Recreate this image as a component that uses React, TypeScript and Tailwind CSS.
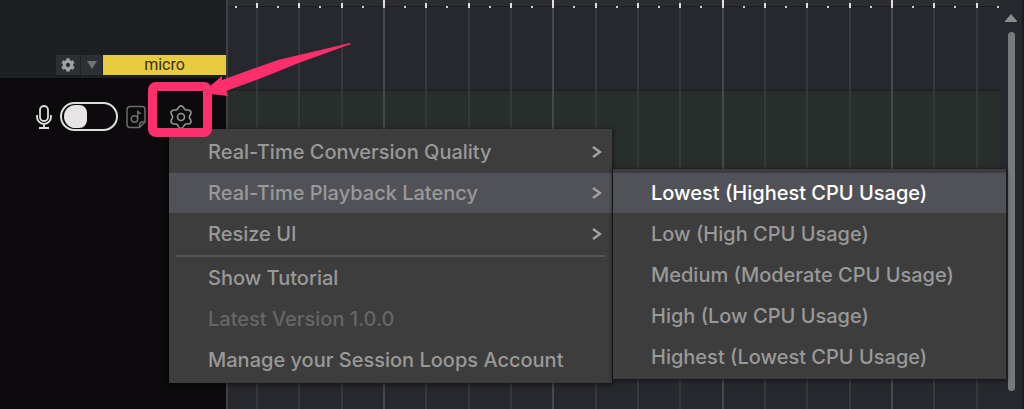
import { FaCog } from 'react-icons/fa'

interface MenuItem {
    label: string
    active?: boolean
    disabled?: boolean
    options?: string[]
    expandable?: boolean
}

const settings: MenuItem[] = [
    { label: 'Real-Time Conversion Quality', expandable: true },
    {
        label: 'Real-Time Playback Latency',
        expandable: true,
        active: true,
        options: [
            'Lowest (Highest CPU Usage)',
            'Low (High CPU Usage)',
            'Medium (Moderate CPU Usage)',
            'High (Low CPU Usage)',
            'Highest (Lowest CPU Usage)',
        ],
    },
    { label: 'Resize UI', expandable: true },
]

const actions: MenuItem[] = [
    { label: 'Show Tutorial' },
    { label: 'Latest Version 1.0.0', disabled: true },
    { label: 'Manage your Session Loops Account' },
]

const beats = Array.from({ length: 18 }, (_, i) => i)

// six soft lobes around a circle
const gearPoints = Array.from({ length: 72 }, (_, i) => {
    const angle = (i * Math.PI) / 36
    const radius = 9.8 + 1.4 * Math.cos(6 * angle)
    const x = 12 + radius * Math.sin(angle)
    const y = 12 - radius * Math.cos(angle)
    return `${x.toFixed(2)},${y.toFixed(2)}`
}).join(' ')

function GearIcon() {
    return (
        <svg className="h-6 w-6" viewBox="0 0 24 24" fill="none" stroke="currentColor" strokeWidth="1.6">
            <polygon points={gearPoints} strokeLinejoin="round" />
            <circle cx="12" cy="12" r="3.5" />
        </svg>
    )
}

function MicIcon() {
    return (
        <svg className="h-6 w-4" viewBox="0 0 16 24" fill="none" stroke="currentColor" strokeWidth="1.8">
            <rect x="4" y="1" width="8" height="15" rx="4" />
            <path d="M1 10v2a7 7 0 0 0 14 0v-2M8 19v4M3 23h10" />
        </svg>
    )
}

function NoteFileIcon() {
    return (
        <svg className="h-6 w-5" viewBox="0 0 20 24" fill="none" stroke="currentColor" strokeWidth="1.5">
            <path d="M4 1.500h12a3 3 0 0 1 3 3V17l-5.500 5.500H4a3 3 0 0 1-3-3v-15a3 3 0 0 1 3-3z" />
            <path d="M13.500 22.500V20a3 3 0 0 1 3-3H19" />
            <circle cx="8.500" cy="14" r="3.200" />
            <path d="M11.700 14V5.500c.3 1.800 1.300 2.700 3.300 3" />
        </svg>
    )
}

function Chevron() {
    return (
        <svg className="h-3 w-2.5" viewBox="0 0 10 12" fill="none" stroke="#a3a3a3" strokeWidth="2.4">
            <path d="M1 1l7 5-7 5" />
        </svg>
    )
}

function MenuRow({ label, active, disabled, options, expandable }: MenuItem) {
    return (
        <li className="relative">
            <button
                type="button"
                disabled={disabled}
                className={`flex h-10 w-full items-center justify-between pr-2.5 pl-[39px] text-left ${
                    active ? 'bg-[#515257]' : ''
                } ${disabled ? 'text-[#666666]' : 'text-[#999999]'}`}
            >
                {label}
                {expandable && <Chevron />}
            </button>
            {options && (
                <ul className="absolute -top-1 left-full ml-px flex w-[393px] flex-col gap-px bg-[#3d3d3d] pt-1 pb-0.5 shadow-[0_1px_4px_1px_rgba(0,0,0,0.5)]">
                    {options.map((option, i) => (
                        <li key={option}>
                            <button
                                type="button"
                                className={`flex h-10 w-full items-center pl-[38px] text-left ${
                                    i === 0 ? 'bg-[#515257] text-white' : 'text-[#999999]'
                                }`}
                            >
                                {option}
                            </button>
                        </li>
                    ))}
                </ul>
            )}
        </li>
    )
}

function SettingsMenu() {
    return (
        <ul className="absolute top-6 left-0 z-10 flex w-[443px] flex-col gap-px bg-[#3d3d3d] py-[3px] font-['Inter',sans-serif] text-[20px] font-medium whitespace-nowrap shadow-[0_1px_4px_1px_rgba(0,0,0,0.5)]">
            {settings.map((item) => (
                <MenuRow key={item.label} {...item} />
            ))}
            <li role="separator" className="mx-[7px] h-0.5 bg-[#545454]" />
            {actions.map((item) => (
                <MenuRow key={item.label} {...item} />
            ))}
        </ul>
    )
}

function TrackPanel() {
    return (
        <aside className="flex w-[226px] shrink-0 flex-col bg-[#0c0a0c]">
            <div className="flex h-[78px] items-end gap-px bg-[#1c2023] pb-[3px] pl-14">
                <button type="button" aria-label="Track settings" className="flex h-5 w-6 items-center justify-center bg-[#2c2f33] text-[#a0a2a3]">
                    <FaCog size={14} />
                </button>
                <button type="button" aria-label="Track menu" className="flex h-5 w-[21px] items-center justify-center bg-[#2c2f33] text-[#707375]">
                    <svg className="h-2 w-2.5" viewBox="0 0 10 8" fill="currentColor">
                        <path d="M0 0h10L5 8z" />
                    </svg>
                </button>
                <div className="flex h-5 grow items-center justify-center bg-[#e9cb40] font-['Roboto',sans-serif] text-base text-[#37321c]">
                    micro
                </div>
            </div>
            <div className="flex items-center pt-6 pl-9 text-[#6c6c6c]">
                <span className="text-[#dedede]">
                    <MicIcon />
                </span>
                <input
                    type="checkbox"
                    role="switch"
                    aria-label="Microphone"
                    className="ml-2 flex h-[29px] w-[58px] appearance-none items-center rounded-full border-2 border-[#dedede] pl-0.5 before:h-[23px] before:w-[23px] before:rounded-l-[12px] before:rounded-r-[8px] before:bg-[#e6e4e4]"
                />
                <span className="ml-2">
                    <NoteFileIcon />
                </span>
                <div className="relative ml-[23px]">
                    <button type="button" aria-label="Settings" className="flex w-6 justify-center text-[#969696]">
                        <GearIcon />
                    </button>
                    <SettingsMenu />
                </div>
            </div>
        </aside>
    )
}

function Timeline() {
    return (
        <main className="relative flex grow flex-col border-l-2 border-[#3d4145] bg-[#27282d]">
            <div className="h-1.5 bg-[#2c2d2f]" />
            <div className="h-px bg-[#1e1f20]" />
            <div className="mr-6 mt-[82px] h-[81px] border-t-2 border-[#202422] bg-[#282e2c]" />
            <div className="absolute inset-0 mr-1.5 ml-7 grid grid-cols-[repeat(18,minmax(0,1fr))]">
                {beats.map((beat) => (
                    <div
                        key={beat}
                        className={`flex flex-col items-center border-l-2 ${
                            beat % 4 === 3 ? 'border-[#46494c]' : 'border-[#36393c]'
                        }`}
                    >
                        <div
                            className={`-ml-0.5 w-0.5 self-start bg-[#dddddd] ${
                                beat % 4 === 3 ? 'h-2' : 'mt-[3px] h-[5px]'
                            }`}
                        />
                        <div className="-mt-0.5 h-0.5 w-0.5 bg-[#d0d0d0]" />
                    </div>
                ))}
            </div>
            <div className="absolute top-1.5 left-[7px] h-0.5 w-0.5 bg-[#d0d0d0]" />
            <div className="absolute inset-y-0 right-0 flex w-6 flex-col items-center border-r-2 border-[#1b1c1f] bg-[#27282d] pt-3.5">
                <svg className="h-2 w-3" viewBox="0 0 12 8" fill="#8a8b8e">
                    <path d="M6 0l6 7v1H0V7z" />
                </svg>
                <div className="mt-2.5 mb-[18px] w-[7px] grow rounded-sm bg-[#77797d]" />
            </div>
        </main>
    )
}

// callout pointing at the settings button
function Callout() {
    return (
        <div className="pointer-events-none absolute top-[82px] left-[148px] z-20">
            <div className="h-[55px] w-16 rounded-lg border-9 border-[#ff2e6c]" />
            <svg className="absolute -top-10 left-12 h-16 w-40" viewBox="0 0 160 64" fill="#ff2e6c">
                <path d="M154 1L82 18 26 38V34L6 51l26 3-2-5 33-12 20-8 17-7L155 2z" />
            </svg>
        </div>
    )
}

export default function App() {
    return (
        <div className="relative flex min-h-screen overflow-hidden">
            <TrackPanel />
            <Timeline />
            <Callout />
        </div>
    )
}
